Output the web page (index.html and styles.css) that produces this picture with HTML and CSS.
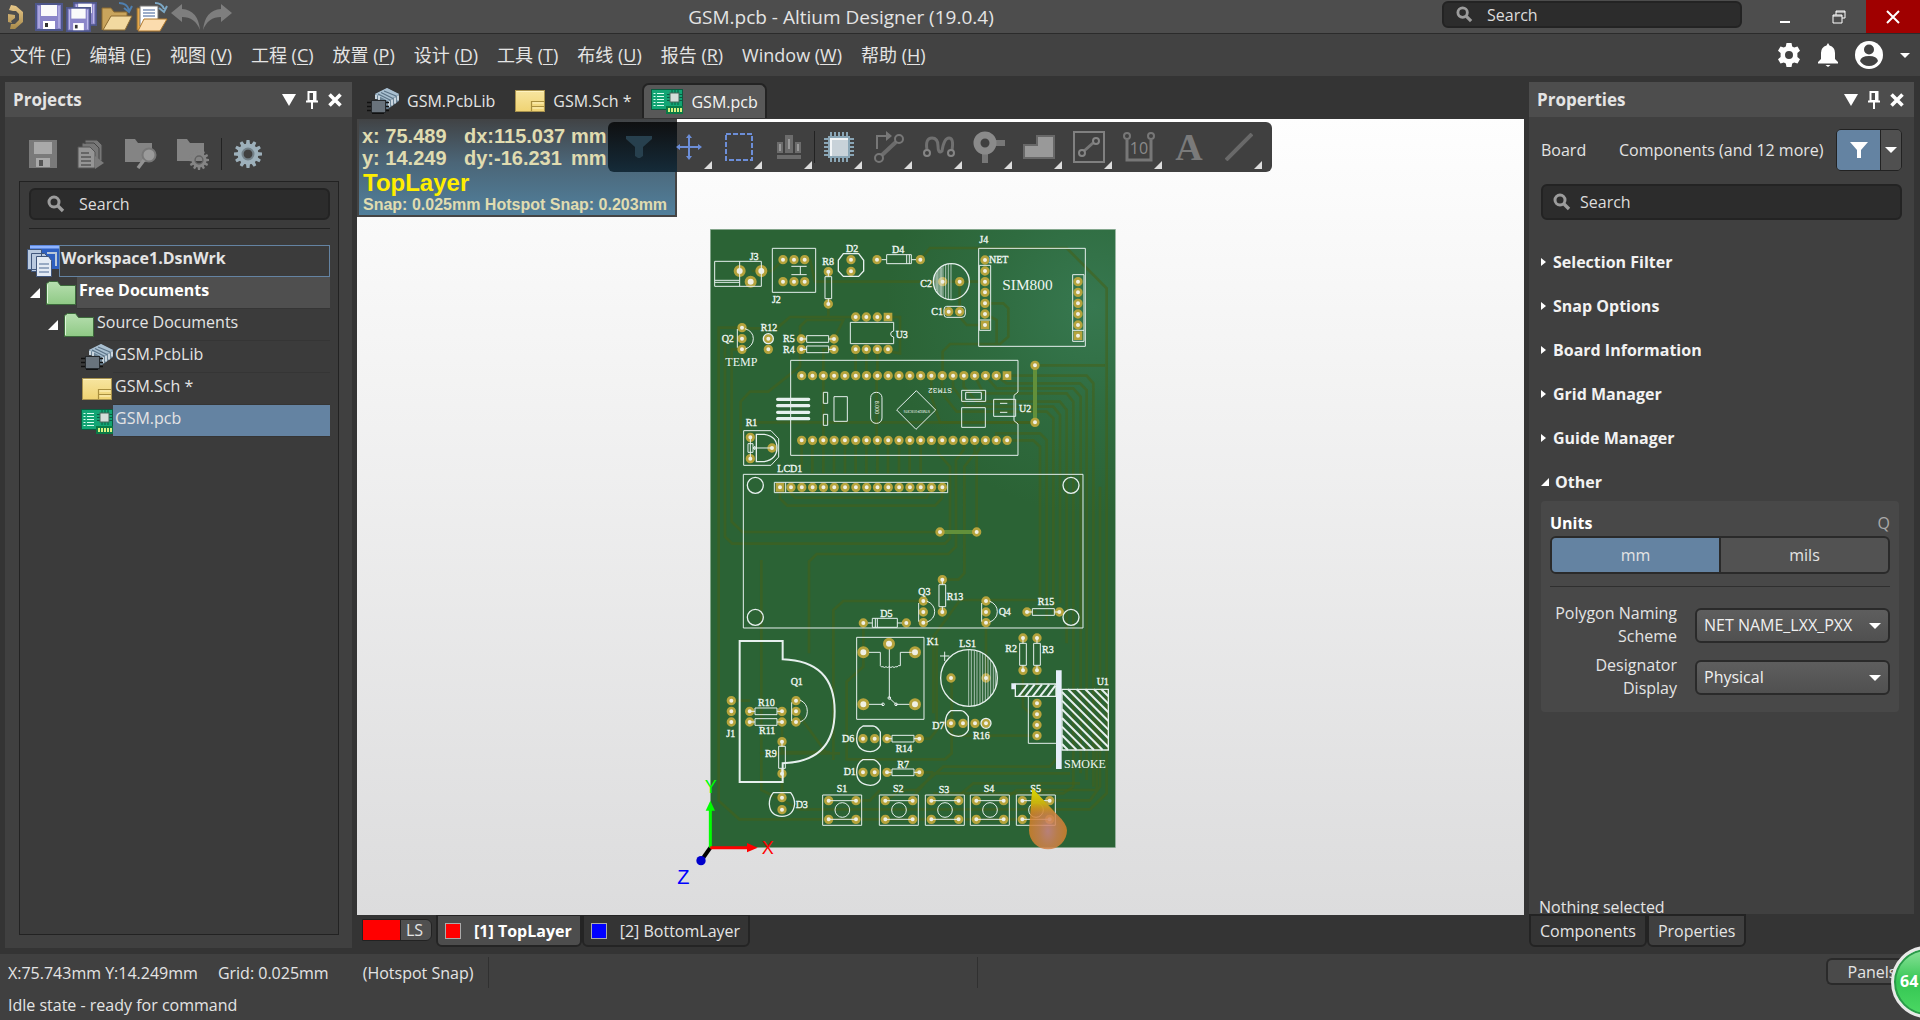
FILE: index.html
```html
<!DOCTYPE html>
<html lang="zh-CN">
<head>
<meta charset="utf-8">
<title>GSM.pcb - Altium Designer (19.0.4)</title>
<link rel="stylesheet" href="styles.css">
</head>
<body>
<svg class="defs" width="0" height="0" aria-hidden="true">
  <defs>
    <linearGradient id="g-folder" x1="0" y1="0" x2="0" y2="1"><stop offset="0" stop-color="#b7dfb0"/><stop offset="1" stop-color="#8fc985"/></linearGradient>
    <linearGradient id="g-sch" x1="0" y1="0" x2="0" y2="1"><stop offset="0" stop-color="#f7e5a0"/><stop offset="1" stop-color="#efd373"/></linearGradient>
    <linearGradient id="g-gold" x1="0" y1="0" x2="0" y2="1"><stop offset="0" stop-color="#e8c88a"/><stop offset="1" stop-color="#a88a4a"/></linearGradient>
    <symbol id="i-search" viewBox="0 0 18 18"><circle cx="7" cy="7" r="5" fill="none" stroke="#9c9c9c" stroke-width="3"/><path d="M11 11l5 5" stroke="#9c9c9c" stroke-width="3.4"/></symbol>
    <symbol id="i-lib" viewBox="0 0 32 26">
      <path d="M8 6L20 0l12 6v7l-11 8-6-1V12L8 11z" fill="#6d8597"/><path d="M8 6L20 0l12 6-11 7z" fill="#a9bfd0"/>
      <path d="M11 6l12 6M14 4.500l12 6M17 3l12 5" stroke="#5c7488" stroke-width="1.300"/><path d="M22 13v6M25 11.500v6M28 9.500v6M31 7.500v5M9 7v4M12 8v4" stroke="#dfe8ef" stroke-width="1.600"/>
      <path d="M0 14.500h5M0 18.500h5M0 22.500h5M18 14.500h4M18 18.500h4M18 22.500h4M5 25.500h12" stroke="#111" stroke-width="1.300"/>
      <rect x="4.500" y="12.500" width="14" height="12" fill="#69737c" stroke="#262a2d"/></symbol>
    <symbol id="i-sch" viewBox="0 0 30 22"><rect x=".5" y=".5" width="29" height="21" fill="url(#g-sch)" stroke="#a8924e"/><path d="M16.500 21v-9.500h13M16.500 16.500h13" fill="none" stroke="#a98f3e" stroke-width="1.200"/><path d="M17.500 18h11M17.500 13h11M1.500 1.500h27" stroke="#fff3c0"/></symbol>
    <symbol id="i-pcb" viewBox="0 0 32 25"><rect x=".5" y=".5" width="31" height="20" fill="#13a574" stroke="#0a5c40"/><rect x="15" y="17" width="17" height="8" fill="#0b7a46"/>
      <path d="M6 4.500h7M6 7.500h7M6 10.500h7M6 13.500h7M6 16.500h7" stroke="#d9fff0"/><path d="M2.500 4.500h2M2.500 7.500h2M2.500 10.500h2M2.500 13.500h2M2.500 16.500h2" stroke="#d9fff0"/>
      <path d="M21 1v15M24 1v15M27 1v15M16 5.500h15M16 8.500h15M16 11.500h15" stroke="#0b5b41"/><rect x="19" y="4" width="9" height="9" fill="#d5ded9" stroke="#46695b"/><path d="M18 19v4M21 19v4M24 19v4M27 19v4M30 19v4" stroke="#efff8a" stroke-width="1.800"/></symbol>
    <symbol id="i-folder" viewBox="0 0 30 24"><path d="M.5 23.500V2.500l3-2h8l3 4h15v19z" fill="url(#g-folder)" stroke="#3c6a3b"/><path d="M1.500 22V3.500" stroke="#dff5da"/></symbol>
    <symbol id="i-cog" viewBox="0 0 28 28"><g fill="currentColor"><path id="tooth" d="M12.500 0h3l.6 5h-4.200zM12.500 28h3l.6-5h-4.200z"/><use href="#tooth" transform="rotate(30 14 14)"/><use href="#tooth" transform="rotate(60 14 14)"/><use href="#tooth" transform="rotate(90 14 14)"/><use href="#tooth" transform="rotate(120 14 14)"/><use href="#tooth" transform="rotate(150 14 14)"/></g><circle cx="14" cy="14" r="7.500" fill="none" stroke="currentColor" stroke-width="6"/><circle cx="14" cy="14" r="5.500" fill="none" stroke="#0004" stroke-width="2"/></symbol>
    <symbol id="i-down" viewBox="0 0 14 12"><path d="M0 0h14L7 12z" fill="#fff"/></symbol>
    <symbol id="i-pin" viewBox="0 0 12 18"><path d="M2.500 1h7v9h-7zM0 10.500h12" fill="none" stroke="#fff" stroke-width="2"/><path d="M8 1v9M6 11v7" stroke="#fff" stroke-width="2"/></symbol>
    <symbol id="i-x" viewBox="0 0 14 14"><path d="M1.500 1.500l11 11M12.500 1.500l-11 11" stroke="#fff" stroke-width="3.600"/></symbol>
    <symbol id="i-caret" viewBox="0 0 10 5"><path d="M0 0h10L5 5z" fill="#fff"/></symbol>
    <symbol id="i-open" viewBox="0 0 10 10"><path d="M10 0v10H0z" fill="#fff"/></symbol>
    <symbol id="i-closed" viewBox="0 0 6 8"><path d="M0 0l5 4-5 4z" fill="#fff"/></symbol>
    <symbol id="i-disk" viewBox="0 0 28 28"><path d="M1 1h26v26H1z" fill="#8b86c9" stroke="#4d5689" stroke-width="2"/><rect x="6" y="2" width="16" height="11" fill="#fafafa"/><rect x="8" y="18" width="12" height="8" fill="#fff"/><rect x="10" y="20" width="3" height="4" fill="#333"/><path d="M4 3v22M24 3v22" stroke="#c9c6f0"/></symbol>
  </defs>
</svg>

<header class="titlebar">
  <div class="quick">
    <svg class="logo" width="16" height="24" viewBox="0 0 16 24"><path d="M1 5l2-5 5 1 7 6v10l-8 7H2l1-5h4l4-4V9L8 6H5zM0 9l7 1v3l-4 3 1 2-4-1z" fill="url(#g-gold)"/></svg>
    <button class="icon" aria-label="Save"><svg width="28" height="28"><use href="#i-disk"/></svg></button>
    <button class="icon" aria-label="Save all"><svg width="32" height="30" viewBox="0 0 32 30"><use href="#i-disk" x="7" y="0" width="24" height="24"/><use href="#i-disk" x="0" y="5" width="25" height="25"/></svg></button>
    <button class="icon" aria-label="Open"><svg width="32" height="30" viewBox="0 0 32 30"><path d="M1 28V6h9l3 4h13v6" fill="#c9a45c" stroke="#8c6a30"/><path d="M2 28l8-14h21l-7 14z" fill="#f2d9a0" stroke="#8c6a30"/><path d="M18 1q8 0 10 7M31 4l-3 6-5-4" fill="none" stroke="#4f7faf" stroke-width="2"/></svg></button>
    <button class="icon" aria-label="Open document"><svg width="32" height="30" viewBox="0 0 32 30"><path d="M1 28V6h8v20" fill="#e8a94a" stroke="#8c6a30"/><path d="M4 4h18v20H4z" fill="#fff" stroke="#777"/><path d="M7 8h12M7 11h12M7 14h12" stroke="#7d93b8" stroke-width="1.500"/><path d="M2 29l6-12h23l-7 12z" fill="#fbdcae" stroke="#b0782c"/><path d="M19 1q7 0 9 6M31 4l-3 6-5-4" fill="none" stroke="#7ca7c4" stroke-width="2"/></svg></button>
    <button class="icon" aria-label="Undo"><svg width="29" height="26" viewBox="0 0 29 26"><path d="M0 9L11 0v5q16 1 18 21Q24 13 11 13v5z" fill="#7e7e7e"/></svg></button>
    <button class="icon" aria-label="Redo"><svg width="29" height="26" viewBox="0 0 29 26"><path d="M29 9L18 0v5Q2 6 0 26q5-13 18-13v5z" fill="#7e7e7e"/></svg></button>
  </div>
  <h1>GSM.pcb - Altium Designer (19.0.4)</h1>
  <div class="title-end">
    <label class="search top-search"><svg width="17" height="17"><use href="#i-search"/></svg><input type="text" placeholder="Search" aria-label="Search"></label>
    <button class="win" aria-label="Minimize"><svg width="14" height="14"><path d="M2 12h10" stroke="#fff" stroke-width="2"/></svg></button>
    <button class="win" aria-label="Restore"><svg width="14" height="14"><path d="M4 5V1h9v7H10M1 5h9v8H1zM1 6h9M4 2h9" fill="none" stroke="#fff"/></svg></button>
    <button class="win close" aria-label="Close"><svg width="14" height="14"><path d="M1 1l12 12M13 1L1 13" stroke="#fff" stroke-width="2"/></svg></button>
  </div>
</header>

<nav class="menubar">
  <div class="menus">
    <a href="#">文件 (<u>F</u>)</a><a href="#">编辑 (<u>E</u>)</a><a href="#">视图 (<u>V</u>)</a><a href="#">工程 (<u>C</u>)</a><a href="#">放置 (<u>P</u>)</a><a href="#">设计 (<u>D</u>)</a><a href="#">工具 (<u>T</u>)</a><a href="#">布线 (<u>U</u>)</a><a href="#">报告 (<u>R</u>)</a><a href="#">Window (<u>W</u>)</a><a href="#">帮助 (<u>H</u>)</a>
  </div>
  <div class="account">
    <button class="icon" aria-label="Settings"><svg width="24" height="24" viewBox="0 0 24 24"><path fill="#fff" fill-rule="evenodd" d="M9.500 0h5l.7 3.400 2 1.200 3.300-1.200 2.500 4.300L20.400 10v4l2.600 2.300-2.500 4.300-3.300-1.200-2 1.200-.7 3.400h-5l-.7-3.400-2-1.200-3.300 1.200L1 16.300 3.600 14v-4L1 7.700l2.500-4.300 3.300 1.200 2-1.200zM12 8a4 4 0 100 8 4 4 0 000-8z"/></svg></button>
    <button class="icon" aria-label="Notifications"><svg width="20" height="24" viewBox="0 0 20 24"><path fill="#fff" d="M10 0l1.500 2.500Q17 4 17 10v6l3 3v1.500H0V19l3-3v-6q0-6 5.500-7.500zM7.500 22h5L10 24z"/></svg></button>
    <button class="icon" aria-label="Account"><svg width="28" height="28" viewBox="0 0 28 28"><circle cx="14" cy="14" r="14" fill="#fff"/><circle cx="14" cy="8.500" r="5" fill="#424242"/><path d="M5 20q1-5 9-5t9 5q-3 5-9 5t-9-5z" fill="#424242"/></svg></button>
    <button class="icon" aria-label="Account menu"><svg width="10" height="5"><use href="#i-caret"/></svg></button>
  </div>
</nav>

<main class="workspace">
  <section class="panel projects">
    <header class="panel-head"><h2>Projects</h2>
      <button class="icon" aria-label="Panel menu"><svg width="14" height="12"><use href="#i-down"/></svg></button><button class="icon" aria-label="Pin"><svg width="12" height="18"><use href="#i-pin"/></svg></button><button class="icon" aria-label="Close panel"><svg width="14" height="14"><use href="#i-x"/></svg></button></header>
    <div class="proj-tools">
      <button class="icon" aria-label="Save"><svg width="28" height="28" viewBox="0 0 28 28"><path d="M0 0h28v28H0z" fill="#7a7a7a"/><path d="M5 2h18v12H5zM7 18h14v9H7z" fill="#a9a9a9"/><path d="M10 20h4v6h-4z" fill="#555"/></svg></button>
      <button class="icon" aria-label="Compile"><svg width="28" height="30" viewBox="0 0 28 30"><path d="M8 5V1h12l5 5v16h-5M5 9V4h12l5 5v15" fill="#777" stroke="#444"/><path d="M1 8h12l5 5v16H1z" fill="#959595" stroke="#555"/><path d="M4 14h8M4 18h10M4 22h10M4 26h10" stroke="#555" stroke-width="1.500"/><path d="M18 17l9 7-9 6z" fill="#7b7b7b"/></svg></button>
      <button class="icon" aria-label="Explore"><svg width="32" height="30" viewBox="0 0 32 30"><path d="M0 0h10l3 4h14v19H0z" fill="#848484"/><circle cx="24" cy="16" r="6.500" fill="#9a9a9a" stroke="#777" stroke-width="2"/><path d="M19 21l-6 8" stroke="#929292" stroke-width="3.500"/></svg></button>
      <button class="icon" aria-label="Project options"><svg class="dim" width="32" height="32" viewBox="0 0 32 32"><path d="M0 1h10l3 4h14v18H0z" fill="#848484"/><use href="#i-cog" x="12" y="12" width="20" height="20"/></svg></button>
      <i class="vsep"></i>
      <button class="icon steel" aria-label="Options"><svg width="28" height="28"><use href="#i-cog"/></svg></button>
    </div>
    <div class="proj-box">
      <label class="search"><svg width="18" height="18"><use href="#i-search"/></svg><input type="text" placeholder="Search" aria-label="Search projects"></label>
      <ul class="tree">
        <li class="lv0"><svg width="32" height="32" viewBox="0 0 32 32"><path d="M3 0h29v24H3z" fill="#2e5fc0"/><path d="M3 2h29" stroke="#8fb4ff" stroke-width="3"/><path d="M20 8h9v13" fill="none" stroke="#b9c7d8" stroke-width="2"/><path d="M.5 4.500h14v20H.5zM4.500 8.500h13l3 3v15h-16z" fill="#b9c9df" stroke="#40567c"/><path d="M9.500 11.500h12l3 4v16h-15z" fill="#e3eaf4" stroke="#40567c"/><path d="M12 19h10M12 23h10M12 27h10" stroke="#7f94b3" stroke-width="1.500"/></svg><span class="ws">Workspace1.DsnWrk</span></li>
        <li class="lv1"><svg width="10" height="10"><use href="#i-open"/></svg><svg width="30" height="24"><use href="#i-folder"/></svg><span class="free">Free Documents</span></li>
        <li class="lv2"><svg width="10" height="10"><use href="#i-open"/></svg><svg width="30" height="24"><use href="#i-folder"/></svg><span>Source Documents</span></li>
        <li class="lv3"><svg width="32" height="26"><use href="#i-lib"/></svg><span>GSM.PcbLib</span></li>
        <li class="lv3"><svg width="32" height="22"><use href="#i-sch"/></svg><span>GSM.Sch *</span></li>
        <li class="lv3"><svg width="32" height="25"><use href="#i-pcb"/></svg><span class="sel">GSM.pcb</span></li>
      </ul>
    </div>
  </section>

  <section class="editor">
    <nav class="doc-tabs">
      <a href="#"><svg width="32" height="26"><use href="#i-lib"/></svg>GSM.PcbLib</a>
      <a href="#"><svg width="30" height="22"><use href="#i-sch"/></svg>GSM.Sch *</a>
      <a href="#" class="active"><svg width="32" height="25"><use href="#i-pcb"/></svg>GSM.pcb</a>
    </nav>
    <div class="canvas">
      <svg class="board" viewBox="357 119 1167 796" preserveAspectRatio="xMidYMid meet">
        <defs>
          <radialGradient id="g-board" gradientUnits="userSpaceOnUse" cx="1180" cy="260" r="620"><stop offset="0" stop-color="#377850"/><stop offset=".5" stop-color="#2f6c40"/><stop offset="1" stop-color="#2b6335"/></radialGradient>
          <radialGradient id="g-drop" cx=".5" cy=".7" r=".6"><stop offset="0" stop-color="#d08585"/><stop offset=".4" stop-color="#d2824f"/><stop offset="1" stop-color="#d6801c"/></radialGradient>
          <linearGradient id="g-tip" x1="0" y1="0" x2="0" y2="1"><stop offset="0" stop-color="#dcdc00"/><stop offset=".35" stop-color="#c8b80c" stop-opacity=".9"/><stop offset=".65" stop-color="#d08a20" stop-opacity="0"/></linearGradient>
          <path id="pA" d="M249 119h0M282 119h0M314 119h0M249 185h0M282 185h0M314 185h0M385 155h0M385 252h0M453 119h0M453 154h0M531 119h0M661 119h0M728 185h0M779 185h0M746 275h0M779 275h0M855 120h0M855 153h0M855 185h0M855 217h0M855 250h0M855 282h0M1134 185h0M1134 217h0M1134 250h0M1134 282h0M1134 315h0M467 291h0M499 291h0M532 291h0M467 388h0M499 388h0M532 388h0M564 388h0M126 323h0M126 356h0M126 388h0M205 356h0M205 388h0M304 357h0M402 357h0M304 388h0M402 388h0M1005 436h0M1005 607h0M151 652h0M151 716h0M216 684h0"/>
          <path id="pRow" stroke-dasharray="0 32.440" d="M305 467H890M305 661H922M273 802H730"/>
          <path id="pSq" d="M855 315h0M1134 347h0M564 291h0M921 467h0M240 802h0"/>
          <path id="pBig" d="M119 153h0M184 153h0M152 185h0M567 1271h0M490 1297h0M645 1297h0M490 1453h0M645 1453h0"/>
          <path id="pB" transform="translate(0 720)" d="M720 216h0M830 216h0M670 423h0M670 456h0M670 488h0M727 359h0M727 456h0M858 423h0M858 456h0M858 488h0M981 456h0M1078 456h0M490 489h0M619 489h0"/>
          <path id="pC" d="M1089 54h0M1089 151h0M1131 54h0M1131 151h0M873 174h0M978 174h0M873 310h0M909 310h0M945 310h0M978 310h0M1131 250h0M1131 283h0M1131 315h0M1131 347h0M408 242h0M408 274h0M408 306h0M214 242h0M214 274h0M214 306h0M269 274h0M366 274h0M269 306h0M366 306h0M366 365h0M366 461h0M609 356h0M644 356h0M681 356h0M778 356h0M609 457h0M644 457h0M681 457h0M778 457h0M366 533h0M366 569h0"/>
          <g id="pads"><use href="#pA"/><use href="#pRow"/><use href="#pB"/><use href="#pC" x="-120" y="1200"/></g>
          <path id="res" d="M-33-10h66v20h-66zM-49 0h16M33 0h16"/>
          <g id="sw"><path d="M0 0h117v91H0z" fill="none"/><circle cx="59" cy="45" r="22" fill="none"/><path class="gold" d="M18 17h0M100 17h0M18 73h0M100 73h0"/><path class="hole" d="M18 17h0M100 17h0M18 73h0M100 73h0"/><path d="M18 17h82M18 73h82" fill="none"/></g>
        </defs>
        <g transform="translate(700 220) scale(.33333)">
          <rect x="31" y="28" width="1215" height="1855" fill="url(#g-board)" stroke="#8fae97" stroke-width="2"/>
          <g class="traces">
            <path d="M249 119L215 153H155M314 119H330L345 185H855M661 119L690 84H1100L1220 205V1720L1170 1768H300L184 1710V1020M126 388H95V905L127 936H720M126 356H75V950L97 971H735L750 955V740L715 700V661M126 323H56V1742L118 1798H1050M402 357L430 300H320L300 320V440L205 515H150L122 545V640M467 291H270L230 325H126M385 252V291M467 388V467M499 388V450L530 480V661M564 291H600V400L532 388V467M402 388H370V661M855 315H800L779 290V185M855 250H910L925 265V350L900 372H750L728 395V467M855 282L890 300V372M921 467H1160L1180 490V1700M889 467L920 490H1140L1160 510V1680M856 467L890 505H1120L1142 530V1660M824 467L850 520H1100L1120 545V1700L1090 1720H700M791 467V500L830 545H1080L1100 570V1270M759 467V500L800 560H1060L1080 585V1150M726 467V520L770 575H1040L1060 595V1180M694 467V530L720 607H1005"/>
            <path d="M151 607H1005M1005 436H1215M921 661H1000L1020 680V1140H780L700 1250V1480M889 661V640H1020L1040 660V1200M856 661L830 700V936M824 661V700L793 740V1060L775 1079H727M791 661V690L768 720V980L745 1002H350L327 1025V1300M240 802V835L262 857H705L726 835V802M273 802V820L285 833H680L694 802M305 661V740M337 661V760M370 661V760M402 661V760M435 661V760M467 661V760M499 661V760M532 661V760M564 661V760M597 661V760M629 661V760M662 661V760M670 1143H430L400 1170V1620M490 1209V1340L440 1385V1618H735L755 1600V1374M858 1208V1374M978 1176H1010M94 1442H150M288 1474L380 1600H400M246 1661V1733M660 1556H690L710 1530V1250M660 1657H700M561 1741L600 1710H650L730 1640H1050L1075 1610M470 1741H510L540 1710M630 1741L700 1660H1110M760 1741L820 1690H1140M911 1741L950 1710H1190V1500M1048 1741H1170L1200 1700V800M969 1351V1460L990 1480M1011 1351V1400M246 1480V1596H390M180 1600H420M753 1500V1547H1010"/>
            <path class="live" d="M1005 436V607M720 936H830"/>
          </g>
          <g class="gold"><use href="#pads"/></g>
          <use class="gold big" href="#pBig"/><use class="gold sq" href="#pSq"/>
          <g class="hole"><use href="#pads"/></g>
          <use class="hole bigh" href="#pBig"/><use class="hole" href="#pSq"/>
          <g class="silk">
            <path d="M44 124h140v75H44zM119 124v75M44 181h75M44 187h75M217 85h130v132H217zM274 139h46M274 164h46M301 139v25M560 104h74v27h-74zM620 104v27M628 104v27M545 119h15M634 119h14M740 259h46q10 0 10 10v13q0 10-10 10h-46q-8 0-8-10v-13q0-10 8-10zM836 85h320v294H836zM838 136h34v195h-34zM838 300h34M1118 164h34v200h-34zM1118 331h34M451 307h130v26q-9 1-9 9t9 9v20H451zM112 327v56M135 326q25 8 25 30t-25 32"/>
            <path class="bold" d="M430 101h46l15 20v32l-15 16h-46l-15-16v-32z"/>
            <path d="M272 421h682v95l-12 10v76l12 10v94H272zM370 517h13v33h-13zM370 583h13v33h-13zM402 530h40v74h-40zM785 511h72v33h-72zM797 517h47v21h-47zM785 563h71v59h-71zM881 538h66v51h-66zM900 550h22M900 577h22M590 570l59-58 58 58-59 58zM131 632h82l23 24v55l-23 25h-82zM144 671h15v26h-15zM151 652v64M159 684h57M159 684l6-5v10z"/>
            <rect x="512" y="517" width="34" height="93" rx="16"/><circle class="bold" cx="754" cy="185" r="54"/><circle class="bold" cx="205" cy="356" r="15"/><path class="bold" d="M169 643v82h24q38-8 38-42t-38-40z"/>
            <path class="hatch" d="M705 165v40M709 160v50M713 152v66M717 148v74M721 144v82M725 142v86M729 138v94M737 134v102M745 132v106M753 131v108"/>
            <path class="fat" d="M233 538h93M233 557h93M233 577h93M233 596h93"/>
            <use href="#res" transform="translate(385 203) rotate(90)"/><use href="#res" x="353" y="357"/><use href="#res" x="353" y="388"/>
            <path d="M130 763h1019v461H130zM223 787h520v31H223zM257 787v31M656 1149v56M680 1143q24 10 24 32t-24 32M845 1149v56M868 1143q24 10 24 32t-24 32M517 1195h75v27h-75zM526 1195v27M532 1195v27M504 1209h13M592 1209h14"/>
            <g class="bold"><circle cx="166" cy="796" r="24"/><circle cx="1113" cy="796" r="24"/><circle cx="166" cy="1192" r="24"/><circle cx="1113" cy="1192" r="24"/></g>
            <use href="#res" transform="translate(727 1127) rotate(90)"/><use href="#res" x="1030" y="1176"/>
          </g>
          <g class="silk" transform="translate(-120 1200)">
            <path d="M590 52h202v246H590zM627 97h34v40q3 6 8 3 4 5 9 0 4 5 10 0 4 5 10 0 4 5 9 0 5 3 8-3h6V97h34M688 88v146l20 19h40M627 253h42M840 108h28M854 95v28M1105 230v140h83M395 247v56M420 240q22 10 22 34t-22 32"/>
            <circle cx="688" cy="234" r="4"/><circle cx="669" cy="253" r="4"/><circle cx="708" cy="253" r="4"/>
            <path class="xbold" d="M239 486V63h129v55q156 5 156 156T368 430v56z"/>
            <circle class="bold" cx="927" cy="174" r="85"/><circle class="bold" cx="978" cy="310" r="15"/>
            <path class="hatch" d="M926 90v168M934 90v168M943 92v165M951 93v162M960 97v155M968 100v148M976 104v139M984 111v126M992 120v108M1000 130v86M1006 143v60"/>
            <path class="bold" d="M609 318h30q10 0 22 18v40q-8 18-30 19-41-3-41-39 0-28 19-38zM609 419h30q10 0 22 18v40q-8 18-30 19-41-3-41-39 0-28 19-38zM873 272h30q10 0 22 18v40q-8 18-30 19-39-3-39-39 0-28 17-38zM340 518h52q12 16 12 34-4 36-38 37-36-1-38-37 0-20 12-34z"/>
            <path class="slab" d="M1188 151h17v296h-17zM1054 190h12v18h-12z"/>
            <path class="bold" d="M1066 192h122v37h-122zM1206 208h139v182h-139z"/>
            <path class="xbold" d="M1076 229l28-36M1096 229l28-36M1118 229l28-36M1140 229l28-36M1162 229l24-32M1206 372l18 18M1206 346l44 44M1206 320l70 70M1206 294l96 96M1206 268l122 122M1206 242l139 139M1206 216l139 139M1224 208l121 121M1250 208l95 95M1276 208l69 69M1302 208l43 43M1324 208l21 21"/>
            <use href="#res" transform="translate(1089 103) rotate(90)"/><use href="#res" transform="translate(1131 103) rotate(90)"/><use href="#res" x="318" y="274"/><use href="#res" x="318" y="306"/><use href="#res" transform="translate(366 412) rotate(90)"/><use href="#res" x="729" y="356"/><use href="#res" x="729" y="457"/>
            <use href="#sw" x="488" y="525"/><use href="#sw" x="658" y="525"/><use href="#sw" x="796" y="525"/><use href="#sw" x="931" y="525"/><use href="#sw" x="1069" y="525"/>
          </g>
          <g class="ref">
            <text x="149" y="120">J3</text><text x="216" y="250">J2</text><text x="367" y="136">R8</text><text x="438" y="95">D2</text><text x="576" y="99">D4</text><text x="838" y="68">J4</text><text x="867" y="128">NET</text><text x="661" y="200">C2</text><text x="694" y="284">C1</text><text x="587" y="354">U3</text><text x="65" y="366">Q2</text><text x="182" y="332">R12</text><text x="249" y="367">R5</text><text x="249" y="398">R4</text><text x="137" y="618">R1</text><text x="232" y="755">LCD1</text><text x="957" y="577">U2</text>
            <text class="lg" x="76" y="437">TEMP</text><text class="xl" x="907" y="211">SIM800</text>
            <text class="sm" transform="translate(756 504) rotate(180)">STM32</text><text class="xs" transform="translate(525 542) rotate(90)">8.000</text><text class="xs tiny" transform="translate(690 569) rotate(180)">STM32F103C8T6</text>
            <text x="655" y="1124">Q3</text><text x="740" y="1139">R13</text><text x="896" y="1184">Q4</text><text x="1013" y="1156">R15</text><text x="541" y="1191">D5</text><text x="680" y="1275">K1</text><text x="778" y="1280">LS1</text><text x="916" y="1296">R2</text><text x="1026" y="1300">R3</text><text x="1190" y="1395">U1</text>
            <text x="272" y="1395">Q1</text><text x="174" y="1458">R10</text><text x="177" y="1543">R11</text><text x="79" y="1550">J1</text><text x="195" y="1610">R9</text><text x="426" y="1566">D6</text><text x="587" y="1596">R14</text><text x="592" y="1643">R7</text><text x="431" y="1665">D1</text><text x="697" y="1527">D7</text><text x="819" y="1557">R16</text><text x="287" y="1765">D3</text>
            <text x="410" y="1716">S1</text><text x="579" y="1716">S2</text><text x="716" y="1718">S3</text><text x="851" y="1716">S4</text><text x="991" y="1716">S5</text><text class="lg" x="1092" y="1643">SMOKE</text>
          </g>
          <path d="M997 1705l72 76q32 30 32 50a57 57 0 01-114 0z" fill="url(#g-drop)" opacity=".85"/>
          <path d="M997 1705l72 76q32 30 32 50H987z" fill="url(#g-tip)"/>
          <g class="axes">
            <path d="M31 1883L5 1920" stroke="#000" stroke-width="12"/><circle cx="3" cy="1922" r="14" fill="#00c"/>
            <path d="M31 1883V1765" stroke="#0f0" stroke-width="9"/><path d="M17 1772h28l-14-30z" fill="#0f0"/>
            <path d="M31 1883H145" stroke="#f00" stroke-width="9"/><path d="M141 1869v28l32-14z" fill="#f00"/>
          </g>
          <g class="axis-name"><text x="14" y="1720" fill="#0f0">Y</text><text x="185" y="1903" fill="#f00">X</text><text class="z" x="-68" y="1991" fill="#00f">Z</text></g>
        </g>
      </svg>

      <div class="hud">
        <div class="coords"><span>x: 75.489</span><span>dx:115.037</span><span>mm</span><span>y: 14.249</span><span>dy:-16.231</span><span>mm</span></div>
        <p class="layer">TopLayer</p>
        <p class="snap">Snap: 0.025mm Hotspot Snap: 0.203mm</p>
      </div>
      <div class="toolbar">
        <button aria-label="Filter"><svg width="26" height="24" viewBox="0 0 26 24"><path d="M0 1h26v3l-9 8v9l-3 2h-2l-3-2v-9L0 4z" fill="#27404e"/></svg></button>
        <button class="more" aria-label="Move"><svg width="26" height="26" viewBox="0 0 26 26"><path d="M13 2v22M2 13h22" stroke="#6c8ed8" stroke-width="2"/><path d="M13 0l3 4h-6zM13 26l3-4h-6zM0 13l4-3v6zM26 13l-4-3v6z" fill="#6c8ed8"/></svg></button>
        <button class="more" aria-label="Select"><svg width="28" height="28"><rect x="1" y="1" width="26" height="26" fill="none" stroke="#6c8ed8" stroke-width="2" stroke-dasharray="5 2"/></svg></button>
        <button class="more" aria-label="Align"><svg width="24" height="24"><path d="M0 7h6v11H0zM8 0h8v18H8zM18 7h6v11h-6zM0 20h24v4H0z" fill="#6c6c6c"/><path d="M2 9h2v7H2zM11 4h2v10h-2zM20 9h2v7h-2z" fill="#999"/></svg></button>
        <button class="more first" aria-label="Place component"><svg width="30" height="30"><path d="M7 0v30M11 0v30M15 0v30M19 0v30M23 0v30M0 7h30M0 11h30M0 15h30M0 19h30M0 23h30" stroke="#8aa6b6" stroke-width="2"/><rect x="4" y="4" width="22" height="22" fill="#8aa6b6"/><rect x="6" y="6" width="18" height="18" fill="#c8d2d9"/><path d="M7 24V7h17" fill="none" stroke="#f2f5f7" stroke-width="2"/></svg></button>
        <button class="more" aria-label="Route"><svg width="30" height="32"><path d="M3 18V5h10" fill="none" stroke="#777" stroke-width="2"/><path d="M12 0l6 5-6 5z" fill="#777"/><path d="M8 24L22 11" stroke="#6c6c6c" stroke-width="4"/><g fill="none" stroke="#777" stroke-width="2"><circle cx="25" cy="8" r="4"/><circle cx="5" cy="27" r="4"/></g></svg></button>
        <button class="more" aria-label="Tune length"><svg width="32" height="22"><path d="M4 14q-2-12 5-12 6 0 6 8t4 5q2-13 7-13 5 0 3 12" fill="none" stroke="#707070" stroke-width="3"/><g fill="#404040" stroke="#858585" stroke-width="2"><circle cx="4" cy="17" r="3"/><circle cx="28" cy="17" r="3"/></g></svg></button>
        <button class="more" aria-label="Place via"><svg width="32" height="32"><path d="M12 20v12M22 12h10" stroke="#777" stroke-width="6"/><circle cx="12" cy="12" r="8" fill="#404040" stroke="#8a8a8a" stroke-width="7"/></svg></button>
        <button class="more" aria-label="Place polygon"><svg width="32" height="24"><path d="M1 23V10h13V1h17v22z" fill="#999" stroke="#686868" stroke-width="2"/></svg></button>
        <button class="more" aria-label="Place keepout"><svg width="32" height="32"><rect x="1" y="1" width="30" height="30" fill="none" stroke="#808080" stroke-width="2"/><path d="M11 20l9-8" stroke="#777" stroke-width="3"/><g fill="none" stroke="#858585" stroke-width="2"><circle cx="23" cy="10" r="3"/><circle cx="9" cy="22" r="3"/></g></svg></button>
        <button class="more dim-btn" aria-label="Place dimension"><svg width="32" height="30"><path d="M4 8v20h24V8" fill="none" stroke="#777" stroke-width="3"/><g fill="none" stroke="#777" stroke-width="2"><circle cx="4" cy="4" r="3"/><circle cx="28" cy="4" r="3"/></g><text x="16" y="22" text-anchor="middle">10</text></svg></button>
        <button class="text-btn" aria-label="Place text">A</button>
        <button class="more" aria-label="Place line"><svg width="28" height="28"><path d="M1 27L27 1" stroke="#696969" stroke-width="4"/></svg></button>
      </div>
    </div>
    <div class="layers">
      <button class="ls"><i></i>LS</button>
      <button class="layer-tab active"><i class="red"></i>[1] TopLayer</button>
      <button class="layer-tab"><i class="blue"></i>[2] BottomLayer</button>
    </div>
  </section>

  <section class="right">
    <div class="panel props">
      <header class="panel-head"><h2>Properties</h2>
        <button class="icon" aria-label="Panel menu"><svg width="14" height="12"><use href="#i-down"/></svg></button><button class="icon" aria-label="Pin"><svg width="12" height="18"><use href="#i-pin"/></svg></button><button class="icon" aria-label="Close panel"><svg width="14" height="14"><use href="#i-x"/></svg></button></header>
      <div class="props-body">
        <div class="scope"><span>Board</span><span>Components (and 12 more)</span>
          <div class="split"><button aria-label="Filter"><svg width="18" height="16"><path d="M0 0h18l-7 8v8H7V8z" fill="#fff"/></svg></button><button aria-label="Filter menu"><svg width="12" height="6"><use href="#i-caret"/></svg></button></div></div>
        <label class="search"><svg width="18" height="18"><use href="#i-search"/></svg><input type="text" placeholder="Search" aria-label="Search properties"></label>
        <div class="sections">
          <button><svg width="6" height="8"><use href="#i-closed"/></svg>Selection Filter</button>
          <button><svg width="6" height="8"><use href="#i-closed"/></svg>Snap Options</button>
          <button><svg width="6" height="8"><use href="#i-closed"/></svg>Board Information</button>
          <button><svg width="6" height="8"><use href="#i-closed"/></svg>Grid Manager</button>
          <button><svg width="6" height="8"><use href="#i-closed"/></svg>Guide Manager</button>
          <button><svg width="8" height="8"><use href="#i-open"/></svg>Other</button>
        </div>
        <div class="card">
          <div class="card-head"><b>Units</b><span>Q</span></div>
          <div class="units"><button class="on">mm</button><button>mils</button></div>
          <div class="fields">
            <label for="poly">Polygon Naming Scheme</label><div class="pick"><select id="poly"><option>NET NAME_LXX_PXX</option></select><svg width="12" height="6"><use href="#i-caret"/></svg></div>
            <label for="desig">Designator Display</label><div class="pick"><select id="desig"><option>Physical</option></select><svg width="12" height="6"><use href="#i-caret"/></svg></div>
          </div>
        </div>
        <p class="nothing">Nothing selected</p>
      </div>
    </div>
    <div class="panel-tabs"><button>Components</button><button class="active">Properties</button></div>
  </section>
</main>

<footer class="status">
  <div class="status-row"><div class="cell"><span>X:75.743mm Y:14.249mm</span><span>Grid: 0.025mm</span><span class="hs">(Hotspot Snap)</span></div><div class="cell"></div><button class="panels">Panels</button></div>
  <p>Idle state - ready for command</p>
</footer>
<div class="badge-clip"><div class="badge">64</div></div>
</body>
</html>
```
FILE: styles.css
```css
* { box-sizing: border-box; }
body {
  margin: 0; min-height: 100vh; display: flex; flex-direction: column; position: relative;
  background: #343434; color: #e4e4e4;
  font: 16px/24px "Open Sans", "Noto Sans CJK SC", sans-serif;
}
h1, h2, p, ul { margin: 0; padding: 0; }
a { color: inherit; text-decoration: none; }
button, input, select { font: inherit; color: inherit; }
button { padding: 0; border: 0; background: none; }
svg { display: block; flex: none; }
.defs { position: absolute; }
.icon { display: flex; align-items: center; justify-content: center; }

.titlebar { height: 34px; display: grid; grid-template-columns: 1fr auto 1fr; background: #4d4d4d; border-bottom: 1px solid #2b2b2b; align-items: center; }
.quick { display: flex; align-items: center; gap: 3px; padding-left: 8px; }
.logo { margin-right: 8px; }
.titlebar h1 { font-size: 19px; font-weight: 400; padding-right: 238px; }
.title-end { display: flex; height: 33px; justify-content: flex-end; align-self: start; }
.search { display: flex; align-items: center; height: 34px; padding: 0 16px; gap: 14px; background: #2c2c2c; border: 2px solid #232323; border-radius: 6px; }
.search input { flex: 1; min-width: 0; padding: 0; border: 0; outline: 0; background: none; }
.search input::placeholder { color: #dcdcdc; opacity: 1; }
.top-search { width: 300px; height: 27px; margin: 1px 14px 0 0; padding: 0 12px; }
.win { width: 54px; display: flex; align-items: center; justify-content: center; }
.win.close { background: #a00000; }
.top-search { margin-right: 16px; }

.menubar { height: 42px; display: flex; align-items: center; justify-content: space-between; background: #424242; padding: 0 10px; }
.menus { display: flex; gap: 19px; font-size: 18px; white-space: nowrap; }
.menus u { text-underline-offset: 2px; text-decoration-thickness: 1px; }
.account { display: flex; align-items: center; gap: 17px; }

.workspace { flex: 1; display: flex; gap: 5px; padding: 6px 6px 6px 5px; min-height: 0; }
.panel { background: #404040; display: flex; flex-direction: column; }
.panel-head { height: 35px; display: flex; align-items: center; gap: 10px; padding: 0 10px 0 8px; background: #4d4d4d; }
.panel-head h2 { flex: 1; font-size: 17px; font-weight: 700; }
.projects { width: 347px; }
.proj-tools { display: flex; align-items: center; gap: 20px; height: 64px; padding: 9px 24px 0; }
.vsep { width: 1px; height: 32px; background: #222; margin: 0 -8px; }
.steel { color: #9db0bb; }
.dim { color: #858585; }
.proj-box { flex: 1; margin: 0 13px 13px 14px; padding: 6px 8px 6px 9px; border: 1px solid #222; background: #3b3b3b; }
.proj-box .search { height: 32px; }
.tree { list-style: none; margin-top: 8px; padding-top: 16px; border-top: 1px solid #222; }
.tree li { display: flex; align-items: center; height: 32px; }
.tree span { flex: 1; align-self: stretch; padding: 1px 2px; border-bottom: 1px solid #353535; }
.tree .ws { border: 1px solid #6483a2; font-weight: 700; padding: 0 1px; }
.tree .free { background: #4f4f4f; font-weight: 700; color: #fff; margin-left: -5px; }
.tree .sel { background: #6483a2; }
.lv0 { margin-left: -2px; }
.lv1, .lv2 { gap: 6px; }
.lv1 { margin-left: 1px; }
.lv2 { margin-left: 19px; }
.lv2 span { margin-left: -5px; }
.lv3 { margin-left: 52px; }

.editor { flex: 1; min-width: 0; display: flex; flex-direction: column; }
.doc-tabs { display: flex; height: 37px; padding: 1px 0 1px 1px; gap: 2px; }
.doc-tabs a { display: flex; align-items: center; gap: 8px; padding: 0 8px; border: 1px solid transparent; }
.doc-tabs .active { background: #585858; border: 2px solid #232323; border-bottom: 0; border-radius: 7px 7px 0 0; padding: 0 7px; color: #f4f4f4; }
.canvas { flex: 1; position: relative; background: linear-gradient(#fefefe, #f4f4f4 30%, #dcdcdd); }
.board { position: absolute; inset: 0; width: 100%; height: 100%; }

.traces { fill: none; stroke: #456018; stroke-opacity: .55; stroke-width: 8; }
.traces .live { stroke: #62903a; stroke-opacity: 1; stroke-width: 12; }
.gold { fill: none; stroke: #b5a33c; stroke-width: 28; stroke-linecap: round; }
.gold.big { stroke-width: 36; }
.gold.sq { stroke-linecap: square; stroke-width: 26; }
.hole { fill: none; stroke: #f0f0e4; stroke-width: 12; stroke-linecap: round; }
.hole.bigh { stroke-width: 18; }
.silk { fill: none; stroke: #e6f0ee; stroke-width: 3; }
.silk .bold { stroke-width: 4; }
.silk .xbold { stroke-width: 6; }
.silk .fat { stroke-width: 10; stroke-linecap: round; }
.silk .hatch { stroke-width: 2; }
.silk .slab { fill: #e6eefa; stroke: none; }
.ref { font: 30px "Liberation Serif", serif; fill: #eef6f2; stroke: #eef6f2; stroke-width: 1; }
.ref .lg { font-size: 36px; stroke-width: 0; }
.ref .xl { font-size: 46px; stroke-width: 0; }
.ref .sm { font: 24px "Liberation Mono", monospace; stroke: none; }
.ref .xs { font: 16px "Liberation Sans", sans-serif; stroke: none; }
.ref .tiny { font-size: 10px; }
.axes { fill: none; }
.axis-name { font: 54px "Liberation Sans", sans-serif; }
.axis-name .z { font-size: 60px; }

.hud { position: absolute; left: 0; top: 0; width: 320px; height: 98px; padding: 3px 3px; border: 2px solid #444; border-top-width: 0; background: linear-gradient(#414345, #4b6577 45%, #51809c); color: #e0dcb0; font: bold 20px/22px "Liberation Sans", Arial, sans-serif; }
.coords { display: grid; grid-template-columns: 102px 107px auto; padding-top: 3px; }
.layer { font-size: 24px; line-height: 28px; color: #ffee00; padding-left: 1px; }
.snap { font-size: 16px; line-height: 16px; padding-left: 1px; white-space: nowrap; }
.toolbar { position: absolute; left: 251px; top: 3px; height: 50px; padding: 0 8px 0 6px; display: flex; border-radius: 6px; background: linear-gradient(#0f1011, #152b39) 0 0 / 69px 100% no-repeat, #404040; }
.toolbar button { position: relative; width: 50px; display: flex; align-items: center; justify-content: center; }
.toolbar .more::after { content: ""; position: absolute; right: 2px; bottom: 3px; border: 4px solid transparent; border-right-color: #ddd; border-bottom-color: #ddd; }
.toolbar .first::before { content: ""; position: absolute; left: 0; top: 9px; width: 1px; height: 32px; background: #222; }
.dim-btn text { font: 16px "Open Sans", sans-serif; fill: #8a8a8a; }
.toolbar .text-btn { font: bold 38px "Liberation Serif", serif; color: #7a7a7a; }

.layers { display: flex; height: 33px; padding-left: 5px; }
.ls { display: flex; align-items: center; width: 70px; height: 22px; margin: 4px 4px 0 0; padding-right: 8px; justify-content: space-between; border: 1px solid #222; border-radius: 0 6px 6px 0; background: #505050; overflow: hidden; }
.ls i { width: 38px; height: 20px; background: #f00; border-right: 1px solid #222; }
.layer-tab { display: flex; align-items: center; gap: 13px; height: 32px; padding: 0 8px 0 7px; border: 2px solid #242424; border-top-width: 1px; border-radius: 0 0 6px 6px; }
.layer-tab i { width: 16px; height: 16px; border: 1px solid #aaa; }
.layer-tab.active { background: #4d4d4d; font-weight: 700; color: #fff; }
.red { background: #f00; }
.blue { background: #00f; }

.right { width: 385px; display: flex; flex-direction: column; }
.props { flex: 1; }
.props-body { flex: 1; display: flex; flex-direction: column; padding: 12px 12px 0; overflow: hidden; }
.scope { display: flex; align-items: center; height: 41px; white-space: nowrap; }
.scope span:first-child { width: 78px; }
.split { display: flex; margin-left: auto; width: 66px; height: 42px; border: 1px solid #222; border-radius: 5px; overflow: hidden; }
.split button { display: flex; align-items: center; justify-content: center; background: #505050; flex: 1; }
.split button:first-child { flex: 0 0 44px; background: #6483a2; border-right: 1px solid #222; }
.props .search { margin-top: 14px; height: 36px; padding: 0 10px; gap: 9px; }
.sections { display: flex; flex-direction: column; padding-top: 20px; }
.sections button { display: flex; align-items: center; gap: 6px; height: 44px; font-weight: 700; color: #f2f2f2; }
.card { margin: -3px 3px 0 0; padding: 10px 9px 12px; border-radius: 4px; background: #484848; }
.card-head { display: flex; justify-content: space-between; padding: 0 0 1px; }
.card-head b { color: #fff; }
.card-head span { color: #aaa; }
.units { display: flex; height: 38px; border: 2px solid #2a2a2a; border-radius: 6px; overflow: hidden; background: #525252; }
.units button { flex: 1; }
.units .on { background: #6483a2; border-right: 2px solid #2a2a2a; }
.fields { display: grid; grid-template-columns: 127px 1fr; gap: 6px 18px; align-items: center; margin-top: 12px; padding-top: 15px; border-top: 1px solid #2f2f2f; text-align: right; line-height: 23px; }
.pick { position: relative; }
.pick select { appearance: none; width: 100%; height: 35px; padding: 0 30px 0 7px; border: 2px solid #2a2a2a; border-radius: 6px; background: linear-gradient(#5e5e5e, #505050); color: #f0f0f0; text-align: left; }
.pick svg { position: absolute; right: 9px; top: 15px; }
.nothing { margin: auto 0 -5px -2px; }
.panel-tabs { display: flex; height: 34px; }
.panel-tabs button { height: 33px; padding: 0 9px; border: 2px solid #232323; border-radius: 0 0 6px 6px; }
.panel-tabs .active { background: #404040; }

.status { height: 66px; background: #404040; }
.status-row { display: flex; height: 39px; padding: 3px 0 5px 8px; }
.cell { display: flex; align-items: center; width: 481px; border-right: 1px solid #303030; gap: 20px; white-space: nowrap; }
.cell + .cell { width: 489px; }
.cell .hs { margin-left: 14px; }
.panels { margin: 1px 0 0 auto; width: 94px; height: 27px; padding-right: 4px; border: 2px solid #2a2a2a; border-right: 0; border-radius: 6px 0 0 6px; background: #4a4a4a; }
.status p { padding-left: 8px; }
.badge-clip { position: absolute; right: 0; bottom: 0; width: 34px; height: 78px; overflow: hidden; }
.badge { position: absolute; left: 5px; top: 4px; width: 72px; height: 72px; border: 3px solid #e8e8e8; border-radius: 50%; background: linear-gradient(#8ce39b, #35c653 50%, #4cd964); box-shadow: inset 0 0 0 2px #2a9a4a; color: #fff; font-size: 16px; font-weight: 700; line-height: 64px; padding-left: 6px; }
```
